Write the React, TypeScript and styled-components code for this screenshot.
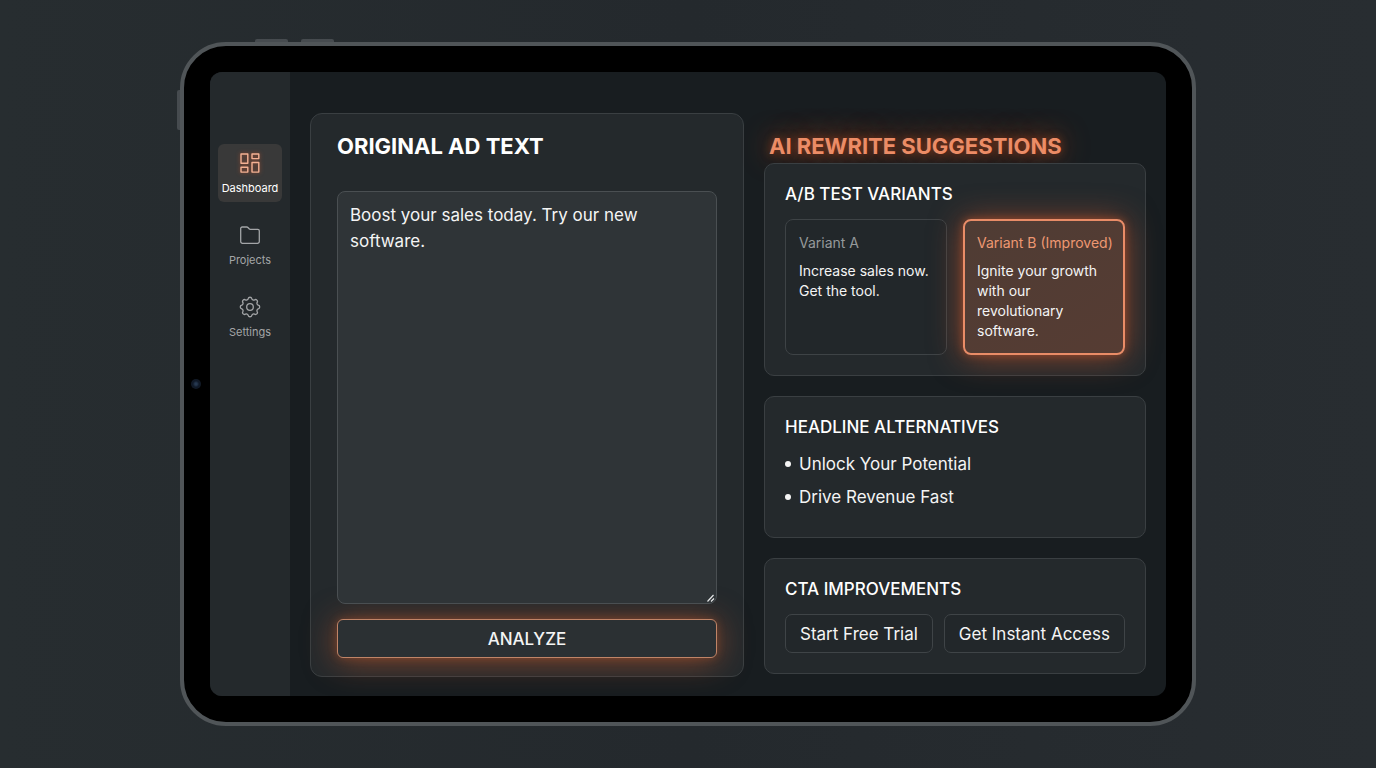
import React from 'react';
import styled, { createGlobalStyle, css } from 'styled-components';

const GlobalStyle = createGlobalStyle`
  *, *::before, *::after { box-sizing: border-box; }
  body {
    margin: 0;
    background: #262b2f;
    color: #f4f4f4;
    font-family: Inter, "Liberation Sans", sans-serif;
  }
  h1, h2, h3, p, ul { margin: 0; padding: 0; }
  button, textarea { font-family: inherit; color: inherit; }
`;

const Stage = styled.div`
  min-height: 100vh;
  padding: 42px 180px;
  display: grid;
  background: linear-gradient(90deg, #272d30, #24292d 50%, #282d31);
`;

const Device = styled.div`
  position: relative;
  display: grid;
  padding: 26px;
  border: 4px solid #505558;
  border-radius: 46px;
  background: #000;
`;

const SideKey = styled.span`
  position: absolute;
  left: -7px;
  top: 44px;
  width: 3px;
  height: 40px;
  border-radius: 2px 0 0 2px;
  background: #464b4f;
`;

const TopKey = styled.span<{ $left: number }>`
  position: absolute;
  top: -7px;
  left: ${(p) => p.$left}px;
  width: 33px;
  height: 3px;
  border-radius: 2px 2px 0 0;
  background: #464b4f;
`;

const Camera = styled.span`
  position: absolute;
  left: 7px;
  top: calc(50% - 5px);
  width: 10px;
  height: 10px;
  border-radius: 50%;
  background: radial-gradient(circle, #263850 0 15%, #0f1826 45%, #141c28 100%);
`;

const Screen = styled.div`
  display: grid;
  grid-template-columns: 80px minmax(0, 1fr);
  border-radius: 12px;
  overflow: hidden;
  background: #181d20;
`;

const Sidebar = styled.nav`
  display: flex;
  flex-direction: column;
  gap: 14px;
  padding: 72px 8px 0;
  background: #24292c;
`;

const NavLink = styled.a<{ $active?: boolean }>`
  display: flex;
  flex-direction: column;
  align-items: center;
  gap: 4px;
  height: 58px;
  padding-top: 7px;
  border-radius: 6px;
  font-size: 11px;
  line-height: 18px;
  text-decoration: none;
  color: #a3a5a7;
  svg { display: block; }
  ${(p) =>
    p.$active &&
    css`
      color: #fff;
      background: #393939;
      svg { color: #f5b193; filter: drop-shadow(0 0 2px rgba(232, 90, 40, 0.6)); }
    `}
`;

const Main = styled.main`
  display: grid;
  grid-template-columns: minmax(0, 434fr) minmax(0, 382fr);
  gap: 20px;
  padding: 41px 20px 19px;
`;

const panel = css`
  border: 1px solid #3a3f42;
  background: #24292c;
`;

const Editor = styled.section`
  ${panel}
  display: flex;
  flex-direction: column;
  padding: 17px 26px 18px;
  border-radius: 12px;
`;

const Title = styled.h1<{ $glow?: boolean }>`
  font-size: 22px;
  line-height: 30px;
  font-weight: 700;
  color: #fff;
  ${(p) =>
    p.$glow &&
    css`
      color: #ec8c66;
      text-shadow: 0 0 8px rgba(190, 75, 30, 0.6), 0 0 28px rgba(200, 80, 30, 0.9);
    `}
`;

const FieldWrap = styled.div`
  position: relative;
  display: grid;
  flex: 1;
  margin: 30px 0 15px;
`;

const AdText = styled.textarea`
  width: 100%;
  padding: 10px 12px;
  border: 1px solid #4a4f52;
  border-radius: 8px;
  background: #2f3437;
  font-size: 17px;
  line-height: 26px;
  resize: none;
  outline: none;
`;

const Grip = styled.svg`
  position: absolute;
  right: 1px;
  bottom: 1px;
`;

const AnalyzeButton = styled.button`
  height: 39px;
  border: 1px solid #c08467;
  border-radius: 6px;
  background: #2b3033;
  font-size: 17px;
  font-weight: 500;
  box-shadow: 0 0 8px rgba(190, 90, 50, 0.35), 0 3px 32px rgba(200, 90, 45, 0.6);
`;

const Suggestions = styled.section`
  display: flex;
  flex-direction: column;
  gap: 20px;
  padding-top: 18px;
`;

const TitleRow = styled.div`
  margin-bottom: -18px;
  padding-left: 5px;
`;

const Card = styled.section<{ $height: number }>`
  ${panel}
  min-height: ${(p) => p.$height}px;
  padding: 18px 20px;
  border-radius: 10px;
`;

const CardTitle = styled.h2`
  font-size: 17px;
  line-height: 24px;
  font-weight: 500;
  color: #fff;
`;

const Variants = styled.div`
  display: grid;
  grid-template-columns: repeat(2, minmax(0, 1fr));
  gap: 16px;
  margin-top: 13px;
`;

const Variant = styled.article<{ $improved?: boolean }>`
  min-height: 136px;
  padding: 13px;
  border: 1px solid #3e4346;
  border-radius: 8px;
  background: #22272a;
  font-size: 14px;
  line-height: 20px;
  ${(p) =>
    p.$improved &&
    css`
      padding: 12px;
      border: 2px solid #e98c67;
      background: linear-gradient(150deg, #4f3c34, #563c33);
      box-shadow: 0 0 8px rgba(210, 90, 45, 0.5), 0 2px 32px rgba(210, 90, 45, 0.6);
    `}
`;

const VariantName = styled.h3<{ $improved?: boolean }>`
  margin-bottom: 8px;
  font: inherit;
  white-space: nowrap;
  color: ${(p) => (p.$improved ? '#ee9872' : '#95999b')};
`;

const Headlines = styled.ul`
  display: grid;
  gap: 9px;
  margin-top: 13px;
  list-style: none;
`;

const Headline = styled.li`
  display: flex;
  align-items: center;
  gap: 8px;
  font-size: 17px;
  line-height: 24px;
  &::before {
    content: '';
    width: 6px;
    height: 6px;
    border-radius: 50%;
    background: #f4f4f4;
  }
`;

const Actions = styled.div`
  display: flex;
  gap: 11px;
  margin-top: 13px;
`;

const CtaButton = styled.button`
  height: 39px;
  padding: 0 14px;
  border: 1px solid #3f4447;
  border-radius: 7px;
  background: #22272a;
  font-size: 17px;
  white-space: nowrap;
`;

const DashboardIcon = () => (
  <svg width="24" height="24" viewBox="0 0 24 24" fill="none" stroke="currentColor" strokeWidth="1.400" strokeLinejoin="round" aria-hidden="true">
    <rect x="3" y="3" width="6.800" height="9.300" />
    <rect x="14" y="3" width="6.800" height="4.600" />
    <rect x="14" y="11.500" width="6.800" height="9.600" />
    <rect x="3" y="16.300" width="6.800" height="4.800" />
  </svg>
);

const FolderIcon = () => (
  <svg width="24" height="24" viewBox="0 0 24 24" fill="none" stroke="currentColor" strokeWidth="1.300" strokeLinejoin="round" aria-hidden="true">
    <path d="M2.700 18.500V5.500A1.500 1.500 0 0 1 4.200 4h4.600a1.500 1.500 0 0 1 1.100.5l1.200 1.300a1.500 1.500 0 0 0 1.100.5h7.600a1.500 1.500 0 0 1 1.500 1.500v10.700a1.800 1.800 0 0 1-1.800 1.800H4.500a1.800 1.800 0 0 1-1.800-1.800z" />
  </svg>
);

const GearIcon = () => (
  <svg width="24" height="24" viewBox="0 0 24 24" fill="none" stroke="currentColor" strokeWidth="1.300" strokeLinejoin="round" aria-hidden="true">
    <circle cx="12" cy="12" r="3.300" />
    <path d="M10.160 3.700A1.900 1.900 0 0 1 13.840 3.700A1.900 1.900 0 0 0 16.570 4.830A1.900 1.900 0 0 1 19.170 7.430A1.900 1.900 0 0 0 20.300 10.160A1.900 1.900 0 0 1 20.300 13.840A1.900 1.900 0 0 0 19.170 16.570A1.900 1.900 0 0 1 16.570 19.170A1.900 1.900 0 0 0 13.840 20.300A1.900 1.900 0 0 1 10.160 20.300A1.900 1.900 0 0 0 7.430 19.170A1.900 1.900 0 0 1 4.830 16.570A1.900 1.900 0 0 0 3.700 13.840A1.900 1.900 0 0 1 3.700 10.160A1.900 1.900 0 0 0 4.830 7.430A1.900 1.900 0 0 1 7.430 4.830A1.900 1.900 0 0 0 10.160 3.700Z" />
  </svg>
);

export default function App() {
  return (
    <>
      <GlobalStyle />
      <Stage>
        <Device>
          <SideKey />
          <TopKey $left={71} />
          <TopKey $left={117} />
          <Camera />
          <Screen>
            <Sidebar aria-label="Main">
              <NavLink href="#dashboard" $active aria-current="page"><DashboardIcon />Dashboard</NavLink>
              <NavLink href="#projects"><FolderIcon />Projects</NavLink>
              <NavLink href="#settings"><GearIcon />Settings</NavLink>
            </Sidebar>
            <Main>
              <Editor>
                <Title as="label" htmlFor="ad-text">ORIGINAL AD TEXT</Title>
                <FieldWrap>
                  <AdText id="ad-text" defaultValue="Boost your sales today. Try our new software." />
                  <Grip width="10" height="10" viewBox="0 0 10 10" stroke="#e5e7e8" strokeWidth="1.200" aria-hidden="true">
                    <path d="M1.500 8.500l6-6.500M5 8.500l3-3" />
                  </Grip>
                </FieldWrap>
                <AnalyzeButton type="button">ANALYZE</AnalyzeButton>
              </Editor>
              <Suggestions>
                <TitleRow><Title $glow>AI REWRITE SUGGESTIONS</Title></TitleRow>
                <Card $height={213}>
                  <CardTitle>A/B TEST VARIANTS</CardTitle>
                  <Variants>
                    <Variant>
                      <VariantName>Variant A</VariantName>
                      <p>Increase sales now. Get the tool.</p>
                    </Variant>
                    <Variant $improved>
                      <VariantName $improved>Variant B (Improved)</VariantName>
                      <p>Ignite your growth with our revolutionary software.</p>
                    </Variant>
                  </Variants>
                </Card>
                <Card $height={142}>
                  <CardTitle>HEADLINE ALTERNATIVES</CardTitle>
                  <Headlines>
                    <Headline>Unlock Your Potential</Headline>
                    <Headline>Drive Revenue Fast</Headline>
                  </Headlines>
                </Card>
                <Card $height={116}>
                  <CardTitle>CTA IMPROVEMENTS</CardTitle>
                  <Actions>
                    <CtaButton type="button">Start Free Trial</CtaButton>
                    <CtaButton type="button">Get Instant Access</CtaButton>
                  </Actions>
                </Card>
              </Suggestions>
            </Main>
          </Screen>
        </Device>
      </Stage>
    </>
  );
}
